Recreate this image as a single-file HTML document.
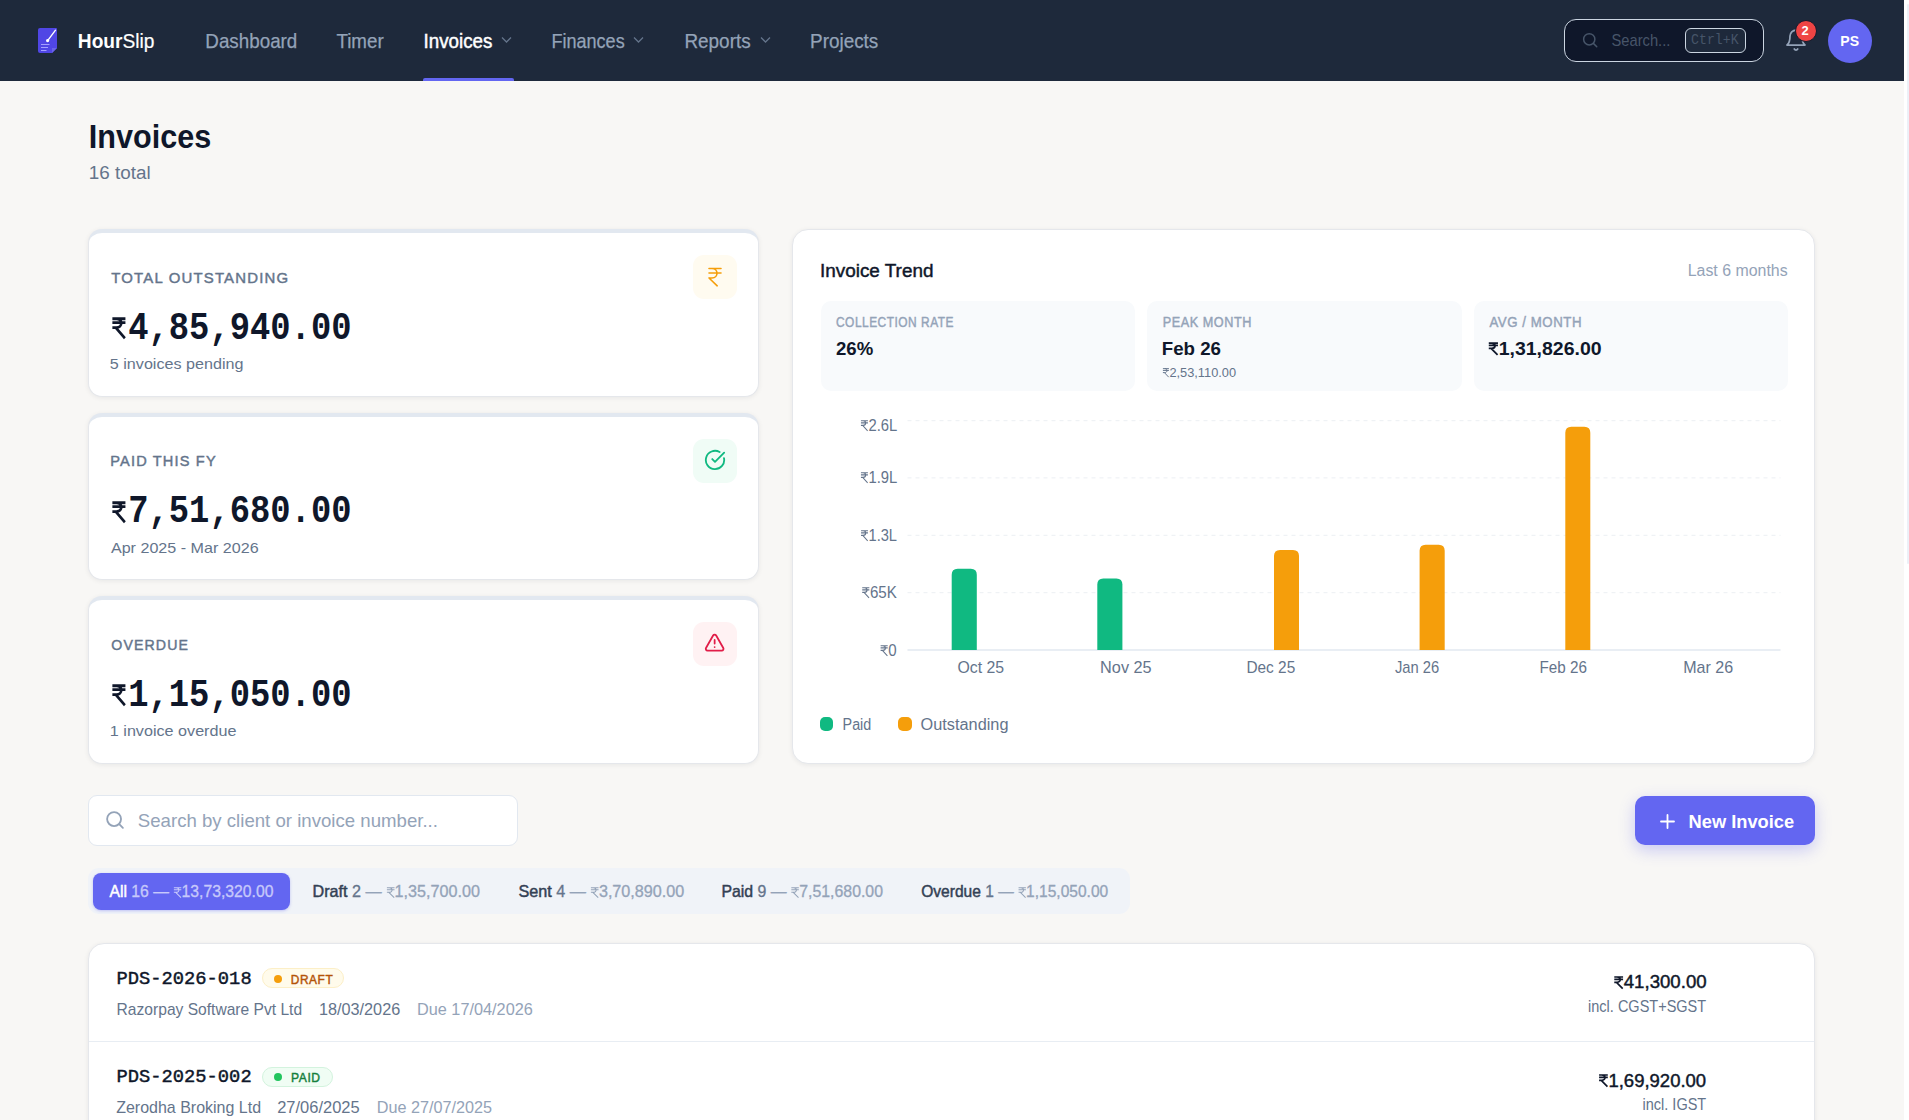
<!DOCTYPE html><html><head><meta charset="utf-8"><title>HourSlip - Invoices</title><style>

*{margin:0;padding:0;box-sizing:border-box}
html,body{width:1909px;height:1120px;overflow:hidden;background:#f8f7f5;font-family:"Liberation Sans",sans-serif}
.t{position:absolute;white-space:nowrap;transform-origin:0 50%}
.t b{font-weight:700;-webkit-text-stroke-width:0}
.sb{-webkit-text-stroke-width:0.45px}
.md{-webkit-text-stroke-width:0.2px}
.md2{-webkit-text-stroke-width:0.3px}
.rs{display:inline-block;vertical-align:baseline;overflow:visible}
.card{position:absolute;background:#fff;border:1px solid #e5e7eb;border-radius:14px;box-shadow:0 1px 5px rgba(15,23,42,0.07)}
.kpi{border-top:4px solid #e2e8f0}

</style></head><body>
<div style="position:absolute;left:0;top:0;width:1904px;height:80.5px;background:#1e293b"></div>
<svg style="position:absolute;left:37px;top:27px;" width="21" height="27" viewBox="0 0 21 27"><path d="M3 1H19Q20 1 20 2V21L15 26H3Q1 26 1 24V3Q1 1 3 1Z" fill="#5046e5"/><path d="M15 26V21H20Z" fill="#6a63e8"/><path d="M18.5 3.2L11 13.2" stroke="#fff" stroke-width="1.4" stroke-linecap="round"/><circle cx="10.6" cy="13.6" r="1.6" fill="#fff"/><path d="M4 17.5H12.5M4 20.5H11M4 23.5H9.5" stroke="#a5a0ff" stroke-width="1.1"/></svg>
<svg style="position:absolute;left:501.2px;top:36px;" width="11" height="8" viewBox="0 0 11 8"><path d="M1 1.5L5.5 6L10 1.5" fill="none" stroke="#64748b" stroke-width="1.3"/></svg>
<svg style="position:absolute;left:633.3px;top:36px;" width="11" height="8" viewBox="0 0 11 8"><path d="M1 1.5L5.5 6L10 1.5" fill="none" stroke="#64748b" stroke-width="1.3"/></svg>
<svg style="position:absolute;left:759.5px;top:36px;" width="11" height="8" viewBox="0 0 11 8"><path d="M1 1.5L5.5 6L10 1.5" fill="none" stroke="#64748b" stroke-width="1.3"/></svg>
<div style="position:absolute;left:423px;top:77.5px;width:91px;height:3px;background:#6366f1;border-radius:2px 2px 0 0"></div>
<div style="position:absolute;left:1564px;top:19px;width:200px;height:43px;border:1px solid #cbd5e1;border-radius:12px;background:#0f172a"></div>
<svg style="position:absolute;left:1581px;top:31px;" width="18" height="18" viewBox="0 0 24 24"><circle cx="11" cy="11" r="7.5" fill="none" stroke="#475569" stroke-width="2"/><path d="M16.5 16.5L21 21" stroke="#475569" stroke-width="2" stroke-linecap="round"/></svg>
<div style="position:absolute;left:1685px;top:28px;width:61px;height:25px;border:1px solid #cbd5e1;border-radius:6px;background:#1e293b"></div>
<svg style="position:absolute;left:1784px;top:27.6px;" width="24" height="24" viewBox="0 0 24 24"><path d="M6 8a6 6 0 0 1 12 0c0 7 3 9 3 9H3s3-2 3-9" fill="none" stroke="#94a3b8" stroke-width="1.75" stroke-linejoin="round"/><path d="M10.3 21a1.94 1.94 0 0 0 3.4 0" fill="none" stroke="#94a3b8" stroke-width="1.75" stroke-linecap="round"/></svg>
<div style="position:absolute;left:1794.5px;top:20px;width:22px;height:22px;border-radius:50%;background:#ef4444;border:1.5px solid #131a2c"></div>
<div style="position:absolute;left:1828px;top:18.5px;width:44px;height:44px;border-radius:50%;background:#6366f1"></div>
<div style="position:absolute;left:1904px;top:0;width:5px;height:1120px;background:#ffffff"></div>
<div style="position:absolute;left:1907px;top:4px;width:2px;height:560px;background:#edf0f7;border-radius:1px"></div>
<div class="card kpi" style="left:88px;top:229px;width:671px;height:167.67px"></div>
<div style="position:absolute;left:693px;top:255.00px;width:44px;height:44px;border-radius:11px;background:#fffbf0"></div>
<svg style="position:absolute;left:703px;top:264.5px;" width="24" height="24" viewBox="0 0 24 24"><path d="M6 3.5h12M6 8h12M6 13l8.2 7.8M6 13h3M9 13c6.667 0 6.667-9.5 0-9.5" fill="none" stroke="#f59e0b" stroke-width="1.6" stroke-linecap="round" stroke-linejoin="round"/></svg>
<div class="card kpi" style="left:88px;top:412.67px;width:671px;height:167.67px"></div>
<div style="position:absolute;left:693px;top:438.67px;width:44px;height:44px;border-radius:11px;background:#f0fcf6"></div>
<svg style="position:absolute;left:703.7px;top:448.6px;" width="22" height="22" viewBox="0 0 24 24"><path d="M21.8 10A10 10 0 1 1 17 3.34" fill="none" stroke="#10b981" stroke-width="2" stroke-linecap="round"/><path d="M9 11l3 3L22 4" fill="none" stroke="#10b981" stroke-width="2" stroke-linecap="round" stroke-linejoin="round"/></svg>
<div class="card kpi" style="left:88px;top:596.33px;width:671px;height:167.67px"></div>
<div style="position:absolute;left:693px;top:622.33px;width:44px;height:44px;border-radius:11px;background:#fff2f3"></div>
<svg style="position:absolute;left:704.15px;top:632.03px;" width="21.3" height="21.3" viewBox="0 0 24 24"><path d="M21.73 18l-8-14a2 2 0 0 0-3.48 0l-8 14A2 2 0 0 0 4 21h16a2 2 0 0 0 1.73-3Z" fill="none" stroke="#e11d48" stroke-width="2" stroke-linejoin="round"/><path d="M12 9v4M12 17h.01" fill="none" stroke="#e11d48" stroke-width="2" stroke-linecap="round"/></svg>
<div class="card" style="left:792px;top:229px;width:1023px;height:535px;border-radius:16px"></div>
<div style="position:absolute;left:821px;top:301px;width:314.33px;height:90px;border-radius:10px;background:#f8fafc"></div>
<div style="position:absolute;left:1147.33px;top:301px;width:314.33px;height:90px;border-radius:10px;background:#f8fafc"></div>
<div style="position:absolute;left:1473.67px;top:301px;width:314.33px;height:90px;border-radius:10px;background:#f8fafc"></div>
<svg style="position:absolute;left:0;top:0" width="1909" height="1120" viewBox="0 0 1909 1120"><line x1="907.5" y1="420.7" x2="1780.5" y2="420.7" stroke="#eceff3" stroke-width="1" stroke-dasharray="4 4"/><line x1="907.5" y1="477.9" x2="1780.5" y2="477.9" stroke="#eceff3" stroke-width="1" stroke-dasharray="4 4"/><line x1="907.5" y1="535.3" x2="1780.5" y2="535.3" stroke="#eceff3" stroke-width="1" stroke-dasharray="4 4"/><line x1="907.5" y1="592.7" x2="1780.5" y2="592.7" stroke="#eceff3" stroke-width="1" stroke-dasharray="4 4"/><line x1="907.5" y1="650" x2="1780.5" y2="650" stroke="#e2e8f0" stroke-width="1.5"/><path d="M951.7 650V574.8Q951.7 568.8 957.7 568.8H970.8Q976.8 568.8 976.8 574.8V650Z" fill="#10b981"/><path d="M1097.3 650V584.4Q1097.3 578.4 1103.3 578.4H1116.4Q1122.4 578.4 1122.4 584.4V650Z" fill="#10b981"/><path d="M1274 650V556Q1274 550 1280 550H1293Q1299 550 1299 556V650Z" fill="#f59e0b"/><path d="M1419.6 650V550.7Q1419.6 544.7 1425.6 544.7H1438.7Q1444.7 544.7 1444.7 550.7V650Z" fill="#f59e0b"/><path d="M1565.3 650V432.7Q1565.3 426.7 1571.3 426.7H1584.3Q1590.3 426.7 1590.3 432.7V650Z" fill="#f59e0b"/></svg>
<div style="position:absolute;left:820px;top:717px;width:13px;height:14px;border-radius:5px;background:#10b981"></div>
<div style="position:absolute;left:898px;top:717px;width:14px;height:14px;border-radius:5px;background:#f59e0b"></div>
<div style="position:absolute;left:88px;top:795px;width:430px;height:50.5px;border:1px solid #e2e8f0;border-radius:9px;background:#fff"></div>
<svg style="position:absolute;left:104px;top:809px;" width="22" height="22" viewBox="0 0 24 24"><circle cx="11" cy="11" r="7.6" fill="none" stroke="#94a3b8" stroke-width="2"/><path d="M16.6 16.6L20.6 20.6" stroke="#94a3b8" stroke-width="2" stroke-linecap="round"/></svg>
<div style="position:absolute;left:1635px;top:796px;width:180px;height:49px;border-radius:10px;background:#6366f1;box-shadow:0 5px 16px rgba(99,102,241,0.32)"></div>
<svg style="position:absolute;left:1659.5px;top:813.5px;" width="15" height="15" viewBox="0 0 15 15"><path d="M7.5 1V14M1 7.5H14" stroke="#fff" stroke-width="1.8" stroke-linecap="round"/></svg>
<div style="position:absolute;left:88px;top:868px;width:1042px;height:46px;border-radius:11px;background:#f0f3f8"></div>
<div style="position:absolute;left:93px;top:873px;width:197px;height:37px;border-radius:8px;background:#6366f1;box-shadow:0 1px 3px rgba(99,102,241,0.35)"></div>
<div class="card" style="left:88px;top:943px;width:1727px;height:400px;border-radius:16px"></div>
<div style="position:absolute;left:89px;top:1041px;width:1725px;height:1px;background:#e8edf3"></div>
<div style="position:absolute;left:262.2px;top:968.4px;width:82.1px;height:20px;border:1px solid #fcefc7;border-radius:11px;background:#fffbeb"></div>
<div style="position:absolute;left:274px;top:974.7px;width:8px;height:8px;border-radius:50%;background:#f59e0b"></div>
<div style="position:absolute;left:262.4px;top:1066.9px;width:70.2px;height:20px;border:1px solid #d3f3de;border-radius:11px;background:#f0fdf4"></div>
<div style="position:absolute;left:274px;top:1073.2px;width:8px;height:8px;border-radius:50%;background:#22c55e"></div>
<div class="t" id="t_logo" style="left:78.75px;top:27.00px;font-family:'Liberation Sans', sans-serif;font-size:20.35px;line-height:28px;font-weight:400;color:#ffffff;transform:translateX(-1.18px) scaleX(0.9406);"><b>Hour</b><span class="md">Slip</span></div>
<div class="t" id="t_nav1" style="left:206.30px;top:28.10px;font-family:'Liberation Sans', sans-serif;font-size:19.48px;line-height:27px;font-weight:400;-webkit-text-stroke-width:0.25px;color:#94a3b8;transform:translateX(-0.68px) scaleX(0.9660);">Dashboard</div>
<div class="t" id="t_nav2" style="left:336.40px;top:28.10px;font-family:'Liberation Sans', sans-serif;font-size:19.48px;line-height:27px;font-weight:400;-webkit-text-stroke-width:0.25px;color:#94a3b8;transform:translateX(0.39px) scaleX(0.9640);">Timer</div>
<div class="t" id="t_nav3" style="left:423.50px;top:28.10px;font-family:'Liberation Sans', sans-serif;font-size:19.48px;line-height:27px;font-weight:400;-webkit-text-stroke-width:0.45px;color:#ffffff;transform:translateX(-0.48px) scaleX(0.9634);">Invoices</div>
<div class="t" id="t_nav4" style="left:552.40px;top:28.10px;font-family:'Liberation Sans', sans-serif;font-size:19.48px;line-height:27px;font-weight:400;-webkit-text-stroke-width:0.25px;color:#94a3b8;transform:translateX(-0.56px) scaleX(0.9269);">Finances</div>
<div class="t" id="t_nav5" style="left:685.40px;top:28.10px;font-family:'Liberation Sans', sans-serif;font-size:19.48px;line-height:27px;font-weight:400;-webkit-text-stroke-width:0.25px;color:#94a3b8;transform:translateX(-0.58px) scaleX(0.9716);">Reports</div>
<div class="t" id="t_nav6" style="left:811.00px;top:28.10px;font-family:'Liberation Sans', sans-serif;font-size:19.48px;line-height:27px;font-weight:400;-webkit-text-stroke-width:0.25px;color:#94a3b8;transform:translateX(-0.97px) scaleX(0.9710);">Projects</div>
<div class="t" id="t_srch" style="left:1611.50px;top:30.40px;font-family:'Liberation Sans', sans-serif;font-size:15.99px;line-height:22px;font-weight:400;color:#475569;transform:translateX(-0.46px) scaleX(0.9194);">Search...</div>
<div class="t" id="t_kbd" style="left:1692.00px;top:30.10px;font-family:'Liberation Mono', monospace;font-size:14.88px;line-height:21px;font-weight:400;color:#475569;transform:translateX(-0.90px) scaleX(0.8860);">Ctrl+K</div>
<div class="t" id="t_bdg" style="left:1802.00px;top:22.40px;font-family:'Liberation Sans', sans-serif;font-size:12.94px;line-height:18px;font-weight:700;color:#ffffff;transform:translateX(-0.60px) scaleX(1.0000);">2</div>
<div class="t" id="t_ps" style="left:1841.30px;top:30.40px;font-family:'Liberation Sans', sans-serif;font-size:15.55px;line-height:22px;font-weight:700;color:#ffffff;transform:translateX(-0.63px) scaleX(0.9050);">PS</div>
<div class="t" id="t_h1" style="left:89.80px;top:113.70px;font-family:'Liberation Sans', sans-serif;font-size:32.56px;line-height:46px;font-weight:700;color:#0f172a;transform:translateX(-1.13px) scaleX(0.9391);">Invoices</div>
<div class="t" id="t_h1s" style="left:89.80px;top:161.00px;font-family:'Liberation Sans', sans-serif;font-size:17.88px;line-height:25px;font-weight:400;color:#64748b;transform:translateX(-1.27px) scaleX(1.0561);">16 total</div>
<div class="t" id="t_kl0" style="left:111.30px;top:266.50px;font-family:'Liberation Sans', sans-serif;font-size:15.26px;line-height:21px;font-weight:400;-webkit-text-stroke-width:0.45px;color:#64748b;letter-spacing:1.2px;transform:translateX(0.29px) scaleX(0.9796);">TOTAL OUTSTANDING</div>
<div class="t" id="t_ka0" style="left:112.00px;top:301.50px;font-family:'Liberation Mono', monospace;font-size:38.26px;line-height:54px;font-weight:700;color:#0f172a;transform:translateX(-1.77px) scaleX(0.8848);"><svg class="rs" width="19.62" height="21.50" viewBox="0 0 10 14" style="margin-right:0.65px"><path d="M0.2 1.15H9.8M0.2 3.65H9.8M3.2 1.15C7.9 1.15 7.9 6.9 3.2 6.9H0.2M2.6 6.9L9.4 13.8" fill="none" stroke="currentColor" stroke-width="1.9" stroke-linejoin="miter"/></svg>4,85,940.00</div>
<div class="t" id="t_ks0" style="left:110.90px;top:353.00px;font-family:'Liberation Sans', sans-serif;font-size:15.12px;line-height:21px;font-weight:400;color:#64748b;transform:translateX(-1.18px) scaleX(1.0677);">5 invoices pending</div>
<div class="t" id="t_kl1" style="left:111.30px;top:450.17px;font-family:'Liberation Sans', sans-serif;font-size:15.26px;line-height:21px;font-weight:400;-webkit-text-stroke-width:0.45px;color:#64748b;letter-spacing:1.2px;transform:translateX(-0.67px) scaleX(0.9564);">PAID THIS FY</div>
<div class="t" id="t_ka1" style="left:112.00px;top:485.17px;font-family:'Liberation Mono', monospace;font-size:38.26px;line-height:54px;font-weight:700;color:#0f172a;transform:translateX(-1.77px) scaleX(0.8848);"><svg class="rs" width="19.62" height="21.50" viewBox="0 0 10 14" style="margin-right:0.65px"><path d="M0.2 1.15H9.8M0.2 3.65H9.8M3.2 1.15C7.9 1.15 7.9 6.9 3.2 6.9H0.2M2.6 6.9L9.4 13.8" fill="none" stroke="currentColor" stroke-width="1.9" stroke-linejoin="miter"/></svg>7,51,680.00</div>
<div class="t" id="t_ks1" style="left:110.90px;top:536.67px;font-family:'Liberation Sans', sans-serif;font-size:15.12px;line-height:21px;font-weight:400;color:#64748b;transform:translateX(-0.11px) scaleX(1.0659);">Apr 2025 - Mar 2026</div>
<div class="t" id="t_kl2" style="left:111.30px;top:633.83px;font-family:'Liberation Sans', sans-serif;font-size:15.26px;line-height:21px;font-weight:400;-webkit-text-stroke-width:0.45px;color:#64748b;letter-spacing:1.2px;transform:translateX(0.28px) scaleX(0.9277);">OVERDUE</div>
<div class="t" id="t_ka2" style="left:112.00px;top:668.83px;font-family:'Liberation Mono', monospace;font-size:38.26px;line-height:54px;font-weight:700;color:#0f172a;transform:translateX(-1.77px) scaleX(0.8848);"><svg class="rs" width="19.62" height="21.50" viewBox="0 0 10 14" style="margin-right:0.65px"><path d="M0.2 1.15H9.8M0.2 3.65H9.8M3.2 1.15C7.9 1.15 7.9 6.9 3.2 6.9H0.2M2.6 6.9L9.4 13.8" fill="none" stroke="currentColor" stroke-width="1.9" stroke-linejoin="miter"/></svg>1,15,050.00</div>
<div class="t" id="t_ks2" style="left:110.90px;top:720.33px;font-family:'Liberation Sans', sans-serif;font-size:15.12px;line-height:21px;font-weight:400;color:#64748b;transform:translateX(-1.18px) scaleX(1.0692);">1 invoice overdue</div>
<div class="t" id="t_ct" style="left:821.00px;top:258.30px;font-family:'Liberation Sans', sans-serif;font-size:18.90px;line-height:26px;font-weight:400;-webkit-text-stroke-width:0.45px;color:#0f172a;transform:translateX(-1.00px) scaleX(1.0000);">Invoice Trend</div>
<div class="t" id="t_cl6" style="left:1688.70px;top:260.30px;font-family:'Liberation Sans', sans-serif;font-size:15.84px;line-height:22px;font-weight:400;color:#94a3b8;transform:translateX(-1.31px) scaleX(1.0051);">Last 6 months</div>
<div class="t" id="t_sl0" style="left:836.00px;top:312.30px;font-family:'Liberation Sans', sans-serif;font-size:14.54px;line-height:20px;font-weight:400;-webkit-text-stroke-width:0.45px;color:#94a3b8;letter-spacing:0.6px;transform:translateX(0.00px) scaleX(0.8217);">COLLECTION RATE</div>
<div class="t" id="t_sv0" style="left:836.00px;top:335.50px;font-family:'Liberation Sans', sans-serif;font-size:18.90px;line-height:26px;font-weight:700;color:#0f172a;transform:translateX(0.00px) scaleX(0.9842);">26%</div>
<div class="t" id="t_sl1" style="left:1162.70px;top:312.30px;font-family:'Liberation Sans', sans-serif;font-size:14.54px;line-height:20px;font-weight:400;-webkit-text-stroke-width:0.45px;color:#94a3b8;letter-spacing:0.6px;transform:translateX(-0.26px) scaleX(0.8733);">PEAK MONTH</div>
<div class="t" id="t_sv1" style="left:1162.70px;top:335.50px;font-family:'Liberation Sans', sans-serif;font-size:18.90px;line-height:26px;font-weight:700;color:#0f172a;transform:translateX(-1.29px) scaleX(0.9897);">Feb 26</div>
<div class="t" id="t_ss1" style="left:1162.70px;top:363.30px;font-family:'Liberation Sans', sans-serif;font-size:13.52px;line-height:19px;font-weight:400;color:#64748b;transform:translateX(-0.28px) scaleX(0.9468);"><svg class="rs" width="6.79" height="9.30" viewBox="0 0 10 14" style="margin-right:0.28px"><path d="M0.2 0.95H9.8M0.2 3.65H9.8M3.2 0.95C7.9 0.95 7.9 6.9 3.2 6.9H0.2M2.6 6.9L9.4 13.8" fill="none" stroke="currentColor" stroke-width="1.5" stroke-linejoin="miter"/></svg>2,53,110.00</div>
<div class="t" id="t_sl2" style="left:1488.50px;top:312.30px;font-family:'Liberation Sans', sans-serif;font-size:14.54px;line-height:20px;font-weight:400;-webkit-text-stroke-width:0.45px;color:#94a3b8;letter-spacing:0.6px;transform:translateX(0.46px) scaleX(0.9119);">AVG / MONTH</div>
<div class="t" id="t_sv2" style="left:1488.50px;top:335.70px;font-family:'Liberation Sans', sans-serif;font-size:18.90px;line-height:26px;font-weight:700;color:#0f172a;transform:translateX(-0.52px) scaleX(1.0321);"><svg class="rs" width="9.49" height="13.00" viewBox="0 0 10 14" style="margin-right:0.39px"><path d="M0.2 1.15H9.8M0.2 3.65H9.8M3.2 1.15C7.9 1.15 7.9 6.9 3.2 6.9H0.2M2.6 6.9L9.4 13.8" fill="none" stroke="currentColor" stroke-width="1.9" stroke-linejoin="miter"/></svg>1,31,826.00</div>
<div class="t" id="t_y0" style="left:860.70px;top:415.30px;font-family:'Liberation Sans', sans-serif;font-size:15.99px;line-height:22px;font-weight:400;color:#64748b;transform:translateX(-0.28px) scaleX(0.9256);"><svg class="rs" width="8.03" height="11.00" viewBox="0 0 10 14" style="margin-right:0.33px"><path d="M0.2 0.90H9.8M0.2 3.65H9.8M3.2 0.90C7.9 0.90 7.9 6.9 3.2 6.9H0.2M2.6 6.9L9.4 13.8" fill="none" stroke="currentColor" stroke-width="1.4" stroke-linejoin="miter"/></svg>2.6L</div>
<div class="t" id="t_y1" style="left:860.70px;top:467.10px;font-family:'Liberation Sans', sans-serif;font-size:15.99px;line-height:22px;font-weight:400;color:#64748b;transform:translateX(-0.28px) scaleX(0.9256);"><svg class="rs" width="8.03" height="11.00" viewBox="0 0 10 14" style="margin-right:0.33px"><path d="M0.2 0.90H9.8M0.2 3.65H9.8M3.2 0.90C7.9 0.90 7.9 6.9 3.2 6.9H0.2M2.6 6.9L9.4 13.8" fill="none" stroke="currentColor" stroke-width="1.4" stroke-linejoin="miter"/></svg>1.9L</div>
<div class="t" id="t_y2" style="left:860.80px;top:524.50px;font-family:'Liberation Sans', sans-serif;font-size:15.99px;line-height:22px;font-weight:400;color:#64748b;transform:translateX(-0.18px) scaleX(0.9179);"><svg class="rs" width="8.03" height="11.00" viewBox="0 0 10 14" style="margin-right:0.33px"><path d="M0.2 0.90H9.8M0.2 3.65H9.8M3.2 0.90C7.9 0.90 7.9 6.9 3.2 6.9H0.2M2.6 6.9L9.4 13.8" fill="none" stroke="currentColor" stroke-width="1.4" stroke-linejoin="miter"/></svg>1.3L</div>
<div class="t" id="t_y3" style="left:862.00px;top:582.20px;font-family:'Liberation Sans', sans-serif;font-size:15.99px;line-height:22px;font-weight:400;color:#64748b;transform:translateX(0.00px) scaleX(0.9459);"><svg class="rs" width="8.03" height="11.00" viewBox="0 0 10 14" style="margin-right:0.33px"><path d="M0.2 0.90H9.8M0.2 3.65H9.8M3.2 0.90C7.9 0.90 7.9 6.9 3.2 6.9H0.2M2.6 6.9L9.4 13.8" fill="none" stroke="currentColor" stroke-width="1.4" stroke-linejoin="miter"/></svg>65K</div>
<div class="t" id="t_y4" style="left:880.40px;top:639.50px;font-family:'Liberation Sans', sans-serif;font-size:15.99px;line-height:22px;font-weight:400;color:#64748b;transform:translateX(0.38px) scaleX(0.9412);"><svg class="rs" width="8.03" height="11.00" viewBox="0 0 10 14" style="margin-right:0.33px"><path d="M0.2 0.90H9.8M0.2 3.65H9.8M3.2 0.90C7.9 0.90 7.9 6.9 3.2 6.9H0.2M2.6 6.9L9.4 13.8" fill="none" stroke="currentColor" stroke-width="1.4" stroke-linejoin="miter"/></svg>0</div>
<div class="t" id="t_x0" style="left:957.50px;top:656.50px;font-family:'Liberation Sans', sans-serif;font-size:15.99px;line-height:22px;font-weight:400;color:#64748b;transform:translateX(-0.50px) scaleX(0.9913);">Oct 25</div>
<div class="t" id="t_x1" style="left:1101.10px;top:656.50px;font-family:'Liberation Sans', sans-serif;font-size:15.99px;line-height:22px;font-weight:400;color:#64748b;transform:translateX(-0.92px) scaleX(1.0184);">Nov 25</div>
<div class="t" id="t_x2" style="left:1247.40px;top:656.50px;font-family:'Liberation Sans', sans-serif;font-size:15.99px;line-height:22px;font-weight:400;color:#64748b;transform:translateX(-0.58px) scaleX(0.9640);">Dec 25</div>
<div class="t" id="t_x3" style="left:1394.90px;top:656.50px;font-family:'Liberation Sans', sans-serif;font-size:15.99px;line-height:22px;font-weight:400;color:#64748b;transform:translateX(-0.09px) scaleX(0.9229);">Jan 26</div>
<div class="t" id="t_x4" style="left:1539.50px;top:656.50px;font-family:'Liberation Sans', sans-serif;font-size:15.99px;line-height:22px;font-weight:400;color:#64748b;transform:translateX(-0.48px) scaleX(0.9531);">Feb 26</div>
<div class="t" id="t_x5" style="left:1684.20px;top:656.50px;font-family:'Liberation Sans', sans-serif;font-size:15.99px;line-height:22px;font-weight:400;color:#64748b;transform:translateX(-0.80px) scaleX(1.0041);">Mar 26</div>
<div class="t" id="t_lg0" style="left:842.50px;top:712.50px;font-family:'Liberation Sans', sans-serif;font-size:16.42px;line-height:23px;font-weight:400;color:#64748b;transform:translateX(-0.44px) scaleX(0.8750);">Paid</div>
<div class="t" id="t_lg1" style="left:920.60px;top:712.50px;font-family:'Liberation Sans', sans-serif;font-size:16.42px;line-height:23px;font-weight:400;color:#64748b;transform:translateX(-0.40px) scaleX(0.9932);">Outstanding</div>
<div class="t" id="t_sin" style="left:137.80px;top:808.30px;font-family:'Liberation Sans', sans-serif;font-size:18.31px;line-height:26px;font-weight:400;color:#94a3b8;transform:translateX(-0.20px) scaleX(1.0177);">Search by client or invoice number...</div>
<div class="t" id="t_nib" style="left:1689.50px;top:808.50px;font-family:'Liberation Sans', sans-serif;font-size:18.90px;line-height:26px;font-weight:700;color:#ffffff;transform:translateX(-1.45px) scaleX(0.9667);">New Invoice</div>
<div class="t" id="t_tb0" style="left:109.40px;top:881.30px;font-family:'Liberation Sans', sans-serif;font-size:15.70px;line-height:22px;font-weight:400;color:#0f172a;transform:translateX(0.40px) scaleX(1.0037);"><span class="sb" style="color:#fff">All</span> <span class="md2" style="color:#c7c9fb">16 — <svg class="rs" width="7.88" height="10.80" viewBox="0 0 10 14" style="margin-right:0.32px"><path d="M0.2 0.85H9.8M0.2 3.65H9.8M3.2 0.85C7.9 0.85 7.9 6.9 3.2 6.9H0.2M2.6 6.9L9.4 13.8" fill="none" stroke="#c7c9fb" stroke-width="1.3" stroke-linejoin="miter"/></svg>13,73,320.00</span></div>
<div class="t" id="t_tb1" style="left:312.50px;top:881.30px;font-family:'Liberation Sans', sans-serif;font-size:15.70px;line-height:22px;font-weight:400;color:#0f172a;transform:translateX(-0.52px) scaleX(1.0302);"><span class="sb" style="color:#334155">Draft</span> <span class="md2" style="color:#64748b">2</span> <span class="md2" style="color:#94a3b8">— <svg class="rs" width="7.88" height="10.80" viewBox="0 0 10 14" style="margin-right:0.32px"><path d="M0.2 0.85H9.8M0.2 3.65H9.8M3.2 0.85C7.9 0.85 7.9 6.9 3.2 6.9H0.2M2.6 6.9L9.4 13.8" fill="none" stroke="#94a3b8" stroke-width="1.3" stroke-linejoin="miter"/></svg>1,35,700.00</span></div>
<div class="t" id="t_tb2" style="left:518.50px;top:881.30px;font-family:'Liberation Sans', sans-serif;font-size:15.70px;line-height:22px;font-weight:400;color:#0f172a;transform:translateX(-0.52px) scaleX(1.0312);"><span class="sb" style="color:#334155">Sent</span> <span class="md2" style="color:#64748b">4</span> <span class="md2" style="color:#94a3b8">— <svg class="rs" width="7.88" height="10.80" viewBox="0 0 10 14" style="margin-right:0.32px"><path d="M0.2 0.85H9.8M0.2 3.65H9.8M3.2 0.85C7.9 0.85 7.9 6.9 3.2 6.9H0.2M2.6 6.9L9.4 13.8" fill="none" stroke="#94a3b8" stroke-width="1.3" stroke-linejoin="miter"/></svg>3,70,890.00</span></div>
<div class="t" id="t_tb3" style="left:722.40px;top:881.30px;font-family:'Liberation Sans', sans-serif;font-size:15.70px;line-height:22px;font-weight:400;color:#0f172a;transform:translateX(-0.61px) scaleX(1.0101);"><span class="sb" style="color:#334155">Paid</span> <span class="md2" style="color:#64748b">9</span> <span class="md2" style="color:#94a3b8">— <svg class="rs" width="7.88" height="10.80" viewBox="0 0 10 14" style="margin-right:0.32px"><path d="M0.2 0.85H9.8M0.2 3.65H9.8M3.2 0.85C7.9 0.85 7.9 6.9 3.2 6.9H0.2M2.6 6.9L9.4 13.8" fill="none" stroke="#94a3b8" stroke-width="1.3" stroke-linejoin="miter"/></svg>7,51,680.00</span></div>
<div class="t" id="t_tb4" style="left:921.20px;top:881.30px;font-family:'Liberation Sans', sans-serif;font-size:15.70px;line-height:22px;font-weight:400;color:#0f172a;transform:translateX(0.20px) scaleX(0.9910);"><span class="sb" style="color:#334155">Overdue</span> <span class="md2" style="color:#64748b">1</span> <span class="md2" style="color:#94a3b8">— <svg class="rs" width="7.88" height="10.80" viewBox="0 0 10 14" style="margin-right:0.32px"><path d="M0.2 0.85H9.8M0.2 3.65H9.8M3.2 0.85C7.9 0.85 7.9 6.9 3.2 6.9H0.2M2.6 6.9L9.4 13.8" fill="none" stroke="#94a3b8" stroke-width="1.3" stroke-linejoin="miter"/></svg>1,15,050.00</span></div>
<div class="t" id="t_rn0" style="left:116.60px;top:965.60px;font-family:'Liberation Mono', monospace;font-size:19.28px;line-height:27px;font-weight:400;-webkit-text-stroke-width:0.45px;color:#0f172a;transform:translateX(-0.39px) scaleX(0.9732);">PDS-2026-018</div>
<div class="t" id="t_rs0" style="left:290.80px;top:970.70px;font-family:'Liberation Sans', sans-serif;font-size:12.50px;line-height:18px;font-weight:400;-webkit-text-stroke-width:0.45px;color:#b45309;letter-spacing:0.6px;transform:translateX(-0.19px) scaleX(0.9500);">DRAFT</div>
<div class="t" id="t_rc0" style="left:116.60px;top:998.50px;font-family:'Liberation Sans', sans-serif;font-size:15.99px;line-height:22px;font-weight:400;color:#64748b;transform:translateX(-0.39px) scaleX(0.9757);">Razorpay Software Pvt Ltd</div>
<div class="t" id="t_rd0" style="left:319.90px;top:998.50px;font-family:'Liberation Sans', sans-serif;font-size:15.99px;line-height:22px;font-weight:400;color:#64748b;transform:translateX(-1.12px) scaleX(1.0165);">18/03/2026</div>
<div class="t" id="t_rdd0" style="left:418.00px;top:998.50px;font-family:'Liberation Sans', sans-serif;font-size:15.99px;line-height:22px;font-weight:400;color:#94a3b8;transform:translateX(-1.02px) scaleX(1.0179);">Due 17/04/2026</div>
<div class="t" id="t_ra0" style="left:1614.00px;top:969.30px;font-family:'Liberation Sans', sans-serif;font-size:18.60px;line-height:26px;font-weight:400;-webkit-text-stroke-width:0.45px;color:#0f172a;transform:translateX(0.00px) scaleX(1.0022);"><svg class="rs" width="9.34" height="12.80" viewBox="0 0 10 14" style="margin-right:0.38px"><path d="M0.2 1.10H9.8M0.2 3.65H9.8M3.2 1.10C7.9 1.10 7.9 6.9 3.2 6.9H0.2M2.6 6.9L9.4 13.8" fill="none" stroke="currentColor" stroke-width="1.8" stroke-linejoin="miter"/></svg>41,300.00</div>
<div class="t" id="t_rt0" style="left:1589.00px;top:995.50px;font-family:'Liberation Sans', sans-serif;font-size:15.99px;line-height:22px;font-weight:400;color:#64748b;transform:translateX(-0.91px) scaleX(0.9070);">incl. CGST+SGST</div>
<div class="t" id="t_rn1" style="left:116.60px;top:1064.10px;font-family:'Liberation Mono', monospace;font-size:19.28px;line-height:27px;font-weight:400;-webkit-text-stroke-width:0.45px;color:#0f172a;transform:translateX(-0.39px) scaleX(0.9732);">PDS-2025-002</div>
<div class="t" id="t_rs1" style="left:291.00px;top:1069.20px;font-family:'Liberation Sans', sans-serif;font-size:12.50px;line-height:18px;font-weight:400;-webkit-text-stroke-width:0.45px;color:#15803d;letter-spacing:0.6px;transform:translateX(0.00px) scaleX(0.9667);">PAID</div>
<div class="t" id="t_rc1" style="left:116.60px;top:1097.00px;font-family:'Liberation Sans', sans-serif;font-size:15.99px;line-height:22px;font-weight:400;color:#64748b;transform:translateX(-0.40px) scaleX(1.0000);">Zerodha Broking Ltd</div>
<div class="t" id="t_rd1" style="left:278.20px;top:1097.00px;font-family:'Liberation Sans', sans-serif;font-size:15.99px;line-height:22px;font-weight:400;color:#64748b;transform:translateX(-0.82px) scaleX(1.0304);">27/06/2025</div>
<div class="t" id="t_rdd1" style="left:377.70px;top:1097.00px;font-family:'Liberation Sans', sans-serif;font-size:15.99px;line-height:22px;font-weight:400;color:#94a3b8;transform:translateX(-1.32px) scaleX(1.0134);">Due 27/07/2025</div>
<div class="t" id="t_ra1" style="left:1598.80px;top:1067.80px;font-family:'Liberation Sans', sans-serif;font-size:18.60px;line-height:26px;font-weight:400;-webkit-text-stroke-width:0.45px;color:#0f172a;transform:translateX(-0.20px) scaleX(0.9944);"><svg class="rs" width="9.34" height="12.80" viewBox="0 0 10 14" style="margin-right:0.38px"><path d="M0.2 1.10H9.8M0.2 3.65H9.8M3.2 1.10C7.9 1.10 7.9 6.9 3.2 6.9H0.2M2.6 6.9L9.4 13.8" fill="none" stroke="currentColor" stroke-width="1.8" stroke-linejoin="miter"/></svg>1,69,920.00</div>
<div class="t" id="t_rt1" style="left:1642.50px;top:1094.00px;font-family:'Liberation Sans', sans-serif;font-size:15.99px;line-height:22px;font-weight:400;color:#64748b;transform:translateX(-0.45px) scaleX(0.9071);">incl. IGST</div>
</body></html>
